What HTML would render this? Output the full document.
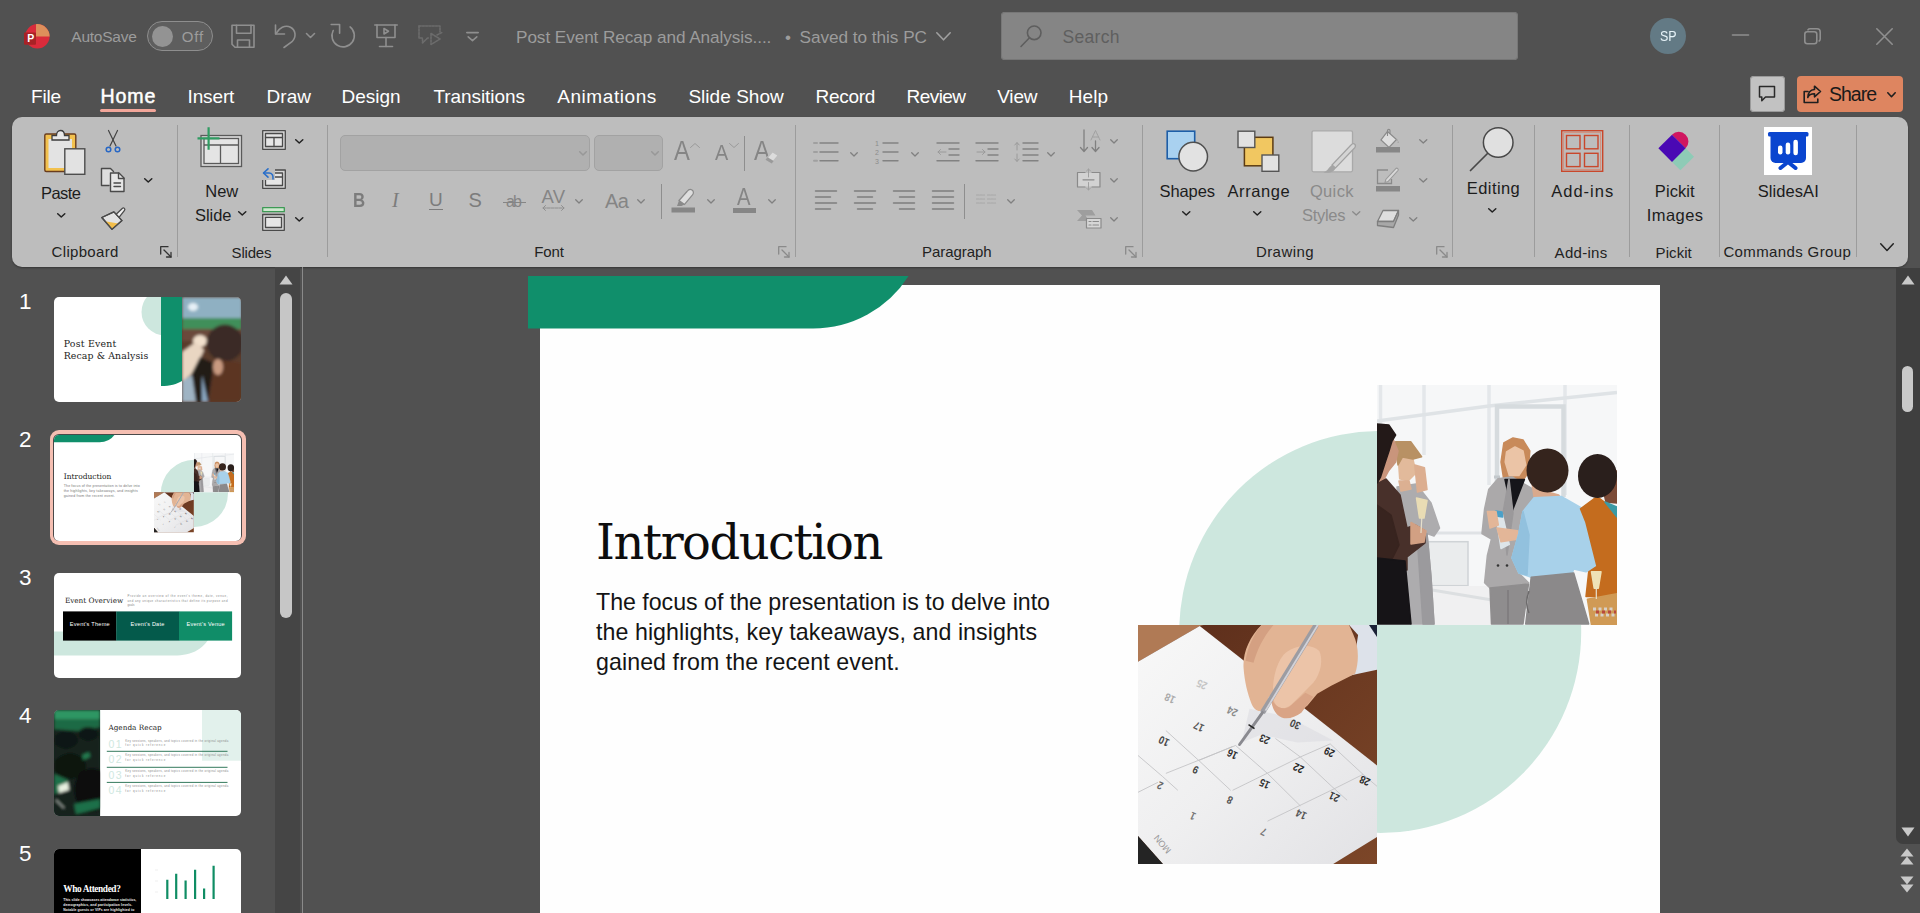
<!DOCTYPE html>
<html lang="en">
<head>
<meta charset="utf-8">
<title>Post Event Recap and Analysis - PowerPoint</title>
<style>
html,body{margin:0;padding:0}
html{overflow:hidden;width:1920px;height:913px}
body{width:1920px;height:913px;overflow:hidden;position:relative;background:#515151;font-family:"Liberation Sans",sans-serif;color:#fff}
.a{position:absolute}
.t{position:absolute;white-space:nowrap;line-height:1;transform-origin:0 50%}
svg{position:absolute;overflow:visible}
.ic{fill:none;stroke:#8f8f8f;stroke-width:1.6;stroke-linecap:round;stroke-linejoin:round}
/* title bar */
#search{left:1001px;top:12px;width:517px;height:48px;background:#858585;border-radius:4px;box-shadow:0 0 0 1px #777 inset}
#avatar{left:1650px;top:18px;width:36px;height:36px;border-radius:50%;background:#637a85}
#toggle{left:147px;top:21px;width:66px;height:30px;border:1.500px solid #8e8e8e;border-radius:15px;background:#5e5e5e;box-sizing:border-box}
#knob{left:151.500px;top:25.500px;width:21px;height:21px;border-radius:50%;background:#939393}
/* tabs */
.tab{font-size:19px;color:#fff}
#homeul{left:100px;top:109px;width:56px;height:3px;border-radius:2px;background:#f2a69a}
#cmt{left:1749.500px;top:76.300px;width:35.500px;height:35.500px;background:#c2c2c2;border-radius:4px;box-shadow:0 0 0 1px #9a9a9a inset}
#share{left:1797px;top:76px;width:105.500px;height:36px;background:#de8560;border-radius:4px}
/* ribbon */
#ribbon{left:12px;top:117px;width:1896px;height:150px;background:#bdbdbd;border-radius:10px;box-shadow:0 1px 2px rgba(0,0,0,.35)}
.sep{position:absolute;width:1px;background:#9c9c9c;top:125px;height:132px}
.rl{font-size:15px;color:#222}
.rb{font-size:17px;color:#1c1c1c}
.dim{color:#8a8a8a}
/* panels */
#thumbsb{left:275px;top:267px;width:24.500px;height:646px;background:#454545}
#divider{left:302px;top:267px;width:1px;height:646px;background:#8a8a8a}
#vsb{left:1895.500px;top:268px;width:25px;height:576px;background:#3f3f3f;border-radius:0 0 0 7px}
.num{font-size:22.500px;color:#fff}
.th{position:absolute;left:54px;width:187px;height:105px;background:#fff;border-radius:5px;overflow:hidden}
/* slide */
#slide{left:540px;top:285px;width:1120px;height:628px;background:#fefefe}
</style>
</head>
<body>
<svg width="0" height="0" style="left:0;top:0">
<defs>
<symbol id="phA" viewBox="0 0 240 240" preserveAspectRatio="none">
<rect width="240" height="240" fill="#f6f7f8"/>
<path d="M3.500 0V40M47 0V70M112 0V100M188 0V110" stroke="#e4e7ea" stroke-width="3.500" fill="none"/>
<path d="M0 36L112 21L240 7.400" stroke="#dfe3e6" stroke-width="3.500" fill="none"/>
<path d="M120 110V21.500H186.500V112" stroke="#d6dbde" stroke-width="4.500" fill="none"/>
<path d="M117 92h6" stroke="#c3c8cc" stroke-width="3"/>
<rect x="51.500" y="156.700" width="39.500" height="44" fill="#eaeced" stroke="#cfd3d6" stroke-width="1.500"/>
<path d="M55 201H118V240H55z" fill="#f0f0f1"/>
<path d="M55 205l60 10" stroke="#dcdfe1" stroke-width="3"/>
<path d="M55 148h50" stroke="#dfe2e5" stroke-width="3"/>
<polygon points="20,102 39,99 54,118 62.5,143 57,151 50,148.5 54,192 57,239 33.7,239 28,176 25.5,159.4" fill="#adacae" stroke="#adacae" stroke-width="1.500" stroke-linejoin="round"/>
<polygon points="40,150 50,148.5 54,192 57,239 46,239" fill="#9b9a9d" stroke="#9b9a9d" stroke-width="1.500" stroke-linejoin="round"/>
<polygon points="21,69 36,74.5 39,88 31,96 22.7,93.7" fill="#e2ba9b" stroke="#e2ba9b" stroke-width="1.500" stroke-linejoin="round"/>
<polygon points="22,96 32,96 34,104 24,106" fill="#dcb092" stroke="#dcb092" stroke-width="1.500" stroke-linejoin="round"/>
<polygon points="18.6,56.7 33.7,56.7 44.6,71.8 36,74 25.5,72 21,80 19,66" fill="#b89164" stroke="#b89164" stroke-width="1.500" stroke-linejoin="round"/>
<polygon points="37.8,80 47.4,82.7 50,104.6 40.5,107" fill="#dcae90" stroke="#dcae90" stroke-width="1.500" stroke-linejoin="round"/>
<polygon points="0,96 9,94 23,110 30,143 38,140 48,146 48,158 30,172 30,185 0,185" fill="#48302a" stroke="#48302a" stroke-width="1.500" stroke-linejoin="round"/>
<polygon points="0,120 14,130 22,160 14,176 0,178" fill="#38241f" stroke="#38241f" stroke-width="1.500" stroke-linejoin="round"/>
<polygon points="0,173 28,176 34,239 0,239" fill="#161417" stroke="#161417" stroke-width="1.500" stroke-linejoin="round"/>
<polygon points="9,52 16,54 21,66 18.6,77 11.8,85.5 7.7,93 2,96" fill="#c9957c" stroke="#c9957c" stroke-width="1.500" stroke-linejoin="round"/>
<polygon points="0,39 11.8,40 18.6,50 15,56 12,66 8,78 3.5,92 0,98" fill="#231918" stroke="#231918" stroke-width="1.500" stroke-linejoin="round"/>
<polygon points="34,137.5 49,146 47,157 34,159" fill="#d2a083" stroke="#d2a083" stroke-width="1.500" stroke-linejoin="round"/>
<polygon points="39.5,113 50,115.6 47,133 42.5,133" fill="#e9dcb4" stroke="#e9dcb4" stroke-width="1.500" stroke-linejoin="round"/>
<path d="M44.800 133L44 148" stroke="#e6e0cc" stroke-width="1.200"/>
<polygon points="126.8,58 136,53 146,55 152.8,66 151,88 146,95 126.8,95 124,77" fill="#c88a5a" stroke="#c88a5a" stroke-width="1.500" stroke-linejoin="round"/>
<polygon points="129.5,67 138,62 146,66 148.7,80 141.9,90.5 132.3,90.5 128.2,77" fill="#ebc4a6" stroke="#ebc4a6" stroke-width="1.500" stroke-linejoin="round"/>
<polygon points="121,93.7 135,92 157,104.6 162.4,115.6 146,132 140.5,186.8 151.5,197.8 113,203 107.6,197.8 110.4,170.4 114.5,154 105,148.5 107.6,123.8 111.7,104.6" fill="#aba9aa" stroke="#aba9aa" stroke-width="1.500" stroke-linejoin="round"/>
<polygon points="128,94.5 147.4,94.5 135,126.5" fill="#15151a" stroke="#15151a" stroke-width="1.500" stroke-linejoin="round"/>
<polygon points="132,94 136,128 130,170 126,128" fill="#9b999b" stroke="#9b999b" stroke-width="1.500" stroke-linejoin="round"/>
<polygon points="113,203 151.5,199 146,239 114.5,239" fill="#8f8d8e" stroke="#8f8d8e" stroke-width="1.500" stroke-linejoin="round"/>
<path d="M131 205V239" stroke="#7c7a7b" stroke-width="1.500"/>
<polygon points="118.6,128 125.4,129.3 132.3,159.4 124,163.5" fill="#dde5e9" stroke="#dde5e9" stroke-width="1.500" stroke-linejoin="round"/>
<polygon points="118.6,126 125,127 125.6,132 119.2,131" fill="#4aa0c8" stroke="#4aa0c8" stroke-width="1.500" stroke-linejoin="round"/>
<polygon points="110.4,126.5 119,126.5 121.3,140 113,143" fill="#e3b698" stroke="#e3b698" stroke-width="1.500" stroke-linejoin="round"/>
<polygon points="120,143 140.5,145.7 141.9,154 124,156.7" fill="#e3b698" stroke="#e3b698" stroke-width="1.500" stroke-linejoin="round"/>
<circle cx="121" cy="180.500" r="1.300" fill="#333"/><circle cx="130" cy="180.500" r="1.300" fill="#333"/>
<polygon points="154,92 162.4,104.6 181.6,110 186,116 158,118" fill="#d9a98c" stroke="#d9a98c" stroke-width="1.500" stroke-linejoin="round"/>
<ellipse cx="170.500" cy="85.500" rx="21" ry="22" fill="#35241d"/>
<polygon points="157,112.8 184.3,111.5 206.2,123.8 220,181.3 209,186.8 196.7,184 195.3,188 154.2,192.3 141.9,188 135,173 141.9,148.5 146,126.5" fill="#a8d1ea" stroke="#a8d1ea" stroke-width="1.500" stroke-linejoin="round"/>
<polygon points="146,126.5 152,150 150,190 141.9,188 135,173 141.9,148.5" fill="#92c1de" stroke="#92c1de" stroke-width="1.500" stroke-linejoin="round"/>
<polygon points="154.2,192.3 196.7,188 211.7,239 148.7,239" fill="#8b898a" stroke="#8b898a" stroke-width="1.500" stroke-linejoin="round"/>
<path d="M152 206c-3 8-3 16 0 22" stroke="#6c6a6b" stroke-width="1.500" fill="none"/>
<polygon points="203.5,123.8 220,111.5 240,126.5 240,211.5 209,211.5 211.7,186.8 220,181.3 209,137.5" fill="#c46c1e" stroke="#c46c1e" stroke-width="1.500" stroke-linejoin="round"/>
<polygon points="226,86 240,86 240,118 229,117 226,104" fill="#7c4b37" stroke="#7c4b37" stroke-width="1.500" stroke-linejoin="round"/>
<polygon points="228,117 240,132 240,122" fill="#3b9aa5" stroke="#3b9aa5" stroke-width="1.500" stroke-linejoin="round"/>
<ellipse cx="220.500" cy="91" rx="19.500" ry="22" fill="#2a1f1c"/>
<polygon points="210.4,214.2 240,208.7 240,240 214.5,240" fill="#d09a55" stroke="#d09a55" stroke-width="1.500" stroke-linejoin="round"/>
<path d="M216 224h22M218 230h20" stroke="#d8d0c8" stroke-width="3" stroke-dasharray="3 2.500"/>
<path d="M219 227h20" stroke="#b8483e" stroke-width="3" stroke-dasharray="3 3"/>
<polygon points="214.5,186.8 224,186.8 221.3,203.2 217.2,203.2" fill="#efe2b6" stroke="#efe2b6" stroke-width="1.500" stroke-linejoin="round"/>
<path d="M219.300 203V214" stroke="#e8e2d0" stroke-width="1.200"/>
</symbol>
<symbol id="phB" viewBox="0 0 240 240" preserveAspectRatio="none">
<defs><linearGradient id="pg" x1="0" y1="0" x2="1" y2="1"><stop offset="0" stop-color="#f8f8f8"/><stop offset="0.500" stop-color="#efeff0"/><stop offset="1" stop-color="#e2e2e5"/></linearGradient><linearGradient id="dg" x1="0" y1="0" x2="1" y2="1"><stop offset="0" stop-color="#5a2c1a"/><stop offset="1" stop-color="#7c4628"/></linearGradient></defs>
<rect width="240" height="240" fill="url(#dg)"/>
<polygon points="0,0 66,0 62,1 0,37" fill="#b07a55"/>
<polygon points="62,1 240,141 240,213 196,240 25,240 0,212 0,37" fill="url(#pg)"/>
<polygon points="0,212 25,240 0,240" fill="#242424"/>
<polygon points="112,84 150,92 196,116 160,118 124,110 104,118" fill="#dadae0" opacity="0.550"/>
<path d="M28 149L98 121M95 166L163 132.500L193 119.400M130 197L194 166L226 150M0 131L24.500 152M28 106L61 136L93 166M98 121L130 149L163 181.600M138 114L163 132.500L194.500 162L210 176M193 119.400L226 150L240 162M24.500 152L40 166M61 136L95 122M0 168L20 158" stroke="#c4c4c6" stroke-width="0.900" fill="none"/>
<g font-family="Liberation Sans, sans-serif" font-weight="bold" font-size="11" text-anchor="middle">
<text fill="#8a8a8a" transform="translate(94.6 87) rotate(205) scale(.85 1)" dy="4">24</text><text fill="#555" transform="translate(61 102.4) rotate(205) scale(.85 1)" dy="4">17</text><text fill="#444" transform="translate(157.7 100) rotate(205) scale(.85 1)" dy="4">30</text><text fill="#333" transform="translate(127 115) rotate(205) scale(.85 1)" dy="4">23</text><text fill="#444" transform="translate(26 116.8) rotate(205) scale(.85 1)" dy="4">10</text><text fill="#2c2c2c" transform="translate(192 128) rotate(205) scale(.85 1)" dy="4">29</text><text fill="#2c2c2c" transform="translate(94.6 130) rotate(205) scale(.85 1)" dy="4">16</text><text fill="#262626" transform="translate(161 144) rotate(205) scale(.85 1)" dy="4">22</text><text fill="#444" transform="translate(57.8 145.7) rotate(205) scale(.85 1)" dy="4">9</text><text fill="#2c2c2c" transform="translate(227.7 156.7) rotate(205) scale(.85 1)" dy="4">28</text><text fill="#333" transform="translate(127 159.7) rotate(205) scale(.85 1)" dy="4">15</text><text fill="#666" transform="translate(22 161.5) rotate(205) scale(.85 1)" dy="4">2</text><text fill="#3a3a3a" transform="translate(197 172.9) rotate(205) scale(.85 1)" dy="4">21</text><text fill="#555" transform="translate(92 176) rotate(205) scale(.85 1)" dy="4">8</text><text fill="#555" transform="translate(163.8 190.4) rotate(205) scale(.85 1)" dy="4">14</text><text fill="#777" transform="translate(55 192) rotate(205) scale(.85 1)" dy="4">1</text><text fill="#777" transform="translate(126 208) rotate(205) scale(.85 1)" dy="4">7</text><text fill="#aaa" transform="translate(32 74) rotate(205) scale(.85 1)" dy="4">18</text><text fill="#c4c4c4" transform="translate(64 60) rotate(205) scale(.85 1)" dy="4">25</text>
<text x="24.500" y="220" fill="#9a9a9a" font-weight="normal" font-size="9" transform="rotate(230 24.500 220)" dy="3">MON</text>
</g>
<polygon points="212,0 240,0 240,45 207,52 218,30 221,10" fill="#dde2ea"/>
<polygon points="232,0 240,0 240,12" fill="#1b2236"/>
<path d="M124 0C112 12 105 28 106 43c1 14 4 26 8 36 3 7 8 9 12 6l6-14c2 8 4 14 10 18 8 3 20-2 28-8l10-12 14-8 24-12c4-12 4-28-2-40L212 0z" fill="#e2b494"/>
<path d="M146 30c10-10 28-12 36-4 4 8 2 22-6 32l-22 22c-8 6-16 4-18-6-2-16 2-34 10-44z" fill="#ecc4a8"/>
<path d="M134 74c4 8 10 12 18 8l16-14 8 4-12 16c-8 6-18 8-24 2-4-4-6-10-6-16z" fill="#d9a486"/>
<path d="M124 0c-8 10-14 22-16 36l8 2c4-14 10-26 20-38z" fill="#d4a082"/>
<path d="M179 0L125 88" stroke="#9c9ca2" stroke-width="5.500" fill="none"/>
<path d="M180.500 0L128 86" stroke="#d2d2d8" stroke-width="1.800" fill="none"/>
<path d="M125 88L102 120" stroke="#8a8a90" stroke-width="3" stroke-linecap="round" fill="none"/>
<path d="M111 100l6 4" stroke="#222" stroke-width="1.500"/>
</symbol>
<filter id="bl" x="-10%" y="-10%" width="120%" height="120%"><feGaussianBlur stdDeviation="1.600"/></filter>
<symbol id="phC" viewBox="0 0 60 105" preserveAspectRatio="none"><rect width="60" height="105" fill="#5a3a2c"/><g filter="url(#bl)">
<rect width="60" height="105" fill="#5a3a2c"/>
<rect width="60" height="22" fill="#8fb0c2"/>
<ellipse cx="11" cy="10" rx="5" ry="4" fill="#e6f0f6"/>
<rect y="21" width="60" height="12" fill="#3f8f5a"/>
<rect y="32" width="60" height="12" fill="#6a4a3a"/>
<ellipse cx="18" cy="44" rx="7" ry="6" fill="#f2e0cc"/>
<path d="M0 55l14-10 8 8-10 22-12 10z" fill="#e9d6c2"/>
<path d="M8 80l10-20 14 6-6 39H10z" fill="#241a18"/>
<path d="M0 84l10-6 4 27H0z" fill="#9fb4c4"/>
<path d="M20 78l6 27h-6z" fill="#8aa6c0"/>
<circle cx="43" cy="46" r="18.500" fill="#3a2b26"/>
<path d="M32 62l28 4v39H28z" fill="#5c3424"/>
<ellipse cx="36" cy="70" rx="5" ry="8" fill="#c99a80"/>
</g></symbol>
<symbol id="phD" viewBox="0 0 46 106" preserveAspectRatio="none"><rect width="46" height="106" fill="#16241d"/><g filter="url(#bl)">
<rect width="46" height="106" fill="#16241d"/>
<rect width="46" height="9" fill="#2f9663"/>
<path d="M0 9h46v8l-20 4-26-2z" fill="#1f6a45"/>
<ellipse cx="12" cy="30" rx="12" ry="9" fill="#0f1512"/>
<ellipse cx="34" cy="24" rx="10" ry="7" fill="#101713"/>
<ellipse cx="16" cy="56" rx="16" ry="13" fill="#0d120f"/>
<path d="M28 45l7-3 1 5-7 3z" fill="#237a50"/>
<ellipse cx="38" cy="80" rx="18" ry="22" fill="#0c100e"/>
<path d="M0 64l14 6-2 10-12 4z" fill="#1f7048"/>
<path d="M4 76l10-4 1 8-10 3z" fill="#e8f0e0"/>
<path d="M20 94l26-5v9l-24 6z" fill="#1f7048"/>
<path d="M2 90l8 8" stroke="#dfe8e0" stroke-width="1"/>
</g></symbol>
</defs></svg>
<!-- TITLE BAR -->
<div class="a" id="titlebar">
<!-- powerpoint logo -->
<svg style="left:24px;top:23.500px" width="27" height="27" viewBox="0 0 27 27">
<defs><clipPath id="lc"><circle cx="13.400" cy="12.300" r="12.200"/></clipPath></defs>
<g clip-path="url(#lc)"><rect x="0" y="0" width="27" height="27" fill="#da2b3b"/><path d="M12 0h15v12.400H12z" fill="#de8f5b"/></g>
<rect x="0" y="8.500" width="12" height="12.200" rx="1" fill="#a82226"/>
<text x="3.200" y="18.300" font-family="Liberation Sans, sans-serif" font-weight="bold" font-size="10.500" fill="#fff">P</text>
</svg>
<span class="t" style="left:71.3px;top:29px;font-size:15.5px;color:#9c9c9c;width:65.5px;letter-spacing:-0.246px">AutoSave</span>
<div class="a" id="toggle"></div><div class="a" id="knob"></div>
<span class="t" style="left:181.7px;top:29px;font-size:15px;color:#9c9c9c;width:21.5px;letter-spacing:0.883px">Off</span>
<!-- save -->
<svg class="ic" style="left:231px;top:24px" width="24" height="24" viewBox="0 0 24 24"><path d="M1 1.200h22v22H4l-3-3z"/><path d="M5.500 1.200v8h14.500v-8"/><path d="M6.500 23v-7h12v7"/></svg>
<!-- undo -->
<svg class="ic" style="left:274px;top:23px" width="24" height="26" viewBox="0 0 24 26"><path d="M1.500 2v9h9"/><path d="M1.800 10.800C5 5 11 1.500 16.500 4.200c5.500 3 6 10 1.500 14.500L10 24.500"/></svg>
<svg class="ic" style="left:306px;top:33px" width="9" height="5" viewBox="0 0 9 5"><path d="M0.500 0.500l4 4 4-4"/></svg>
<!-- redo -->
<svg class="ic" style="left:330px;top:23px" width="26" height="26" viewBox="0 0 26 26"><path d="M20.100 3.900A11.200 11.200 0 1 1 3.200 7.500"/><path d="M1.200 1.500h8.400v8.800"/></svg>
<!-- present -->
<svg class="ic" style="left:374px;top:24px" width="24" height="24" viewBox="0 0 24 24"><path d="M0.800 1h22.400"/><path d="M3 1v12.500h18V1"/><path d="M12 13.500v9"/><path d="M5.500 22.500h13"/><path d="M10 4.500v5.500l4.500-2.750z"/></svg>
<!-- disabled -->
<svg class="ic" style="left:418px;top:25px;stroke:#6c6c6c;stroke-dasharray:2 1.300" width="26" height="22" viewBox="0 0 26 22"><path d="M1 1h21v6"/><path d="M1 1v12h3.500v5l5-5h2"/><path d="M13 8.500v11l9-5.500z"/><path d="M19 10l5-2.500"/></svg>
<!-- customize -->
<svg class="ic" style="left:466px;top:31px" width="13" height="11" viewBox="0 0 13 11"><path d="M0.800 1.600h11.400"/><path d="M2.200 5.800l4.300 3.800 4.300-3.800"/></svg>
<span class="t" style="left:516px;top:28.700px;font-size:17.200px;color:#9c9c9c;width:255.400px;letter-spacing:-0.080px">Post Event Recap and Analysis....</span>
<span class="t" style="left:785px;top:28.700px;font-size:17px;color:#9c9c9c">•</span>
<span class="t" style="left:799.500px;top:28.700px;font-size:17.200px;color:#9c9c9c;width:127.500px;letter-spacing:-0.035px">Saved to this PC</span>
<svg class="ic" style="left:936px;top:32px;stroke:#a0a0a0" width="15" height="9" viewBox="0 0 15 9"><path d="M0.800 0.800l6.700 7 6.700-7"/></svg>
<div class="a" id="search"></div>
<svg class="ic" style="left:1020px;top:24px;stroke:#5e5e5e" width="23" height="24" viewBox="0 0 23 24"><circle cx="14.200" cy="8.800" r="6.800"/><path d="M9.500 13.800L1 22.500"/></svg>
<span class="t" style="left:1062.500px;top:28.700px;font-size:17.500px;color:#5f5f5f;width:57px;letter-spacing:0.309px">Search</span>
<div class="a" id="avatar"></div>
<span class="t" style="left:1659.500px;top:29px;font-size:14.500px;color:#e6f3f8;transform:scaleX(.86)">SP</span>
<svg class="ic" style="left:1732px;top:34px" width="17" height="2" viewBox="0 0 17 2"><path d="M0.500 1h16"/></svg>
<svg class="ic" style="left:1804px;top:28px" width="17" height="17" viewBox="0 0 17 17"><rect x="0.800" y="3.800" width="12" height="12" rx="2.500"/><path d="M4 1.800c0.500-0.700 1.200-1 2-1h7a3.200 3.200 0 0 1 3.200 3.200v7c0 0.800-0.300 1.500-1 2"/></svg>
<svg class="ic" style="left:1876px;top:28px" width="17" height="17" viewBox="0 0 17 17"><path d="M0.800 0.800l15.400 15.400M16.200 0.800L0.800 16.200"/></svg>
</div>
<!-- TABS -->
<div class="a" id="tabs">
<span class="t tab" style="left:31.0px;top:87px;width:30.2px;letter-spacing:-0.142px">File</span>
<span class="t tab" style="left:100.5px;top:87px;width:54.8px;font-size:19.600px;-webkit-text-stroke:0.500px #fff;letter-spacing:0.840px">Home</span>
<span class="t tab" style="left:187.5px;top:87px;width:46.9px;letter-spacing:-0.126px">Insert</span>
<span class="t tab" style="left:266.5px;top:87px;width:44.5px;letter-spacing:0.052px">Draw</span>
<span class="t tab" style="left:341.5px;top:87px;width:59.1px;letter-spacing:-0.011px">Design</span>
<span class="t tab" style="left:433.4px;top:87px;width:91.6px;letter-spacing:-0.062px">Transitions</span>
<span class="t tab" style="left:557.2px;top:87px;width:99.1px;letter-spacing:0.567px">Animations</span>
<span class="t tab" style="left:688.4px;top:87px;width:95.4px;letter-spacing:0.038px">Slide Show</span>
<span class="t tab" style="left:815.6px;top:87px;width:59.7px;letter-spacing:-0.310px">Record</span>
<span class="t tab" style="left:906.6px;top:87px;width:59.4px;letter-spacing:-0.583px">Review</span>
<span class="t tab" style="left:997.2px;top:87px;width:40.3px;letter-spacing:-0.181px">View</span>
<span class="t tab" style="left:1068.8px;top:87px;width:39.2px;letter-spacing:0.041px">Help</span>
<div class="a" id="homeul"></div>
<div class="a" id="cmt"></div>
<svg class="ic" style="left:1758px;top:85px;stroke:#2a2a2a;stroke-width:1.500" width="18" height="18" viewBox="0 0 18 18"><path d="M1.500 1.500h15v10.500H7.500L3.800 15.800V12H1.500z"/></svg>
<div class="a" id="share"></div>
<svg class="ic" style="left:1803px;top:85px;stroke:#1f1f1f;stroke-width:1.600" width="19" height="19" viewBox="0 0 19 19"><path d="M5 6.500H1.200v11h13.600v-3.500"/><path d="M11.500 1.200l6 5.300-6 5.300V8.700C8 8.700 5.800 10 4.800 12.500 5 8 7.500 4.800 11.500 4.500z"/></svg>
<span class="t" style="left:1829px;top:85px;font-size:19.500px;color:#1a1a1a;width:48px;letter-spacing:-1.012px">Share</span>
<svg class="ic" style="left:1887px;top:92px;stroke:#1f1f1f;stroke-width:1.600" width="9" height="6" viewBox="0 0 9 6"><path d="M0.800 0.800l3.700 3.900 3.700-3.900"/></svg>
</div>
<!-- RIBBON -->
<div class="a" id="ribbon"></div>
<div id="rc">
<div class="sep" style="left:177px"></div>
<div class="sep" style="left:327px"></div>
<div class="sep" style="left:795px"></div>
<div class="sep" style="left:1142px"></div>
<div class="sep" style="left:1452px"></div>
<div class="sep" style="left:1534px"></div>
<div class="sep" style="left:1629px"></div>
<div class="sep" style="left:1719px"></div>
<div class="sep" style="left:1856px"></div>
<!-- paste -->
<svg style="left:43px;top:129px" width="44" height="47" viewBox="0 0 44 47">
<rect x="1.800" y="5" width="31" height="37.500" rx="1.500" fill="#f2c14e" stroke="#6a3d1e" stroke-width="1.400"/>
<rect x="5.500" y="10" width="23.500" height="29" fill="#e3e3e3"/>
<path d="M9 11V6.500h4.500c0-3 1.700-5 4-5s4 2 4 5H26V11z" fill="#e8e8e8" stroke="#3c3c3c" stroke-width="1.300"/>
<rect x="21.800" y="19.800" width="20" height="25.500" fill="#e2e2e2" stroke="#4d4d4d" stroke-width="1.400"/>
</svg>
<span class="t rb" style="left:41.0px;top:184.5px;font-size:16.5px;width:40.0px;letter-spacing:-0.551px">Paste</span>
<svg class="ic" style="left:56.5px;top:213.0px;stroke:#222;stroke-width:1.5" width="8.5" height="4.5" viewBox="0 0 8.5 4.5"><path d="M0.700 0.700L4.25 4.00L7.80 0.700"/></svg>
<!-- cut -->
<svg class="ic" style="left:104px;top:129px;stroke:#444;stroke-width:1.200" width="18" height="26" viewBox="0 0 18 26"><path d="M4.500 1.500L12 17"/><path d="M13.500 1.500L6 17"/><circle cx="4.500" cy="20.500" r="2.300" stroke="#2767c5" stroke-width="1.500"/><circle cx="13.500" cy="20.500" r="2.300" stroke="#2767c5" stroke-width="1.500"/></svg>
<!-- copy -->
<svg class="ic" style="left:100px;top:167px;stroke:#4a4a4a;stroke-width:1.400" width="26" height="26" viewBox="0 0 26 26"><path d="M9 18.500H1.500V1.500h9l3 3" fill="#dedede"/><path d="M10.500 6h8.500l5 5v13.500H10.500z" fill="#e6e6e6"/><path d="M18.500 6v5.500H24"/><path d="M14 16h6.500M14 19.500h6.500"/></svg>
<svg class="ic" style="left:144.0px;top:178.0px;stroke:#222;stroke-width:1.5" width="8.5" height="4.5" viewBox="0 0 8.5 4.5"><path d="M0.700 0.700L4.25 4.00L7.80 0.700"/></svg>
<!-- format painter -->
<svg class="ic" style="left:101px;top:206px;stroke:#4a4a4a;stroke-width:1.300" width="26" height="25" viewBox="0 0 26 25"><path d="M15.200 8.200l6.300-5.900c1.200-1.100 3.100.7 2 2l-5.300 6.900" fill="#f2f2f2"/><path d="M12.900 5.900L21 14.600 11 23.300 0.800 11.500z" fill="#e2e2e2"/><path d="M4.200 15.200l13 2.200-6.200 5.400z" fill="#f2bd4a" stroke="none"/><path d="M12.900 5.900L21 14.600 11 23.300 0.800 11.500z"/></svg>
<span class="t rl" style="left:51.6px;top:243.9px;font-size:15.0px;width:66.7px;letter-spacing:0.310px">Clipboard</span>
<svg class="ic" style="left:160.0px;top:246.0px;stroke:#333;stroke-width:1.300" width="12" height="12" viewBox="0 0 12 12"><path d="M0.700 8V0.700H8"/><path d="M4 4l7 7"/><path d="M6.500 11H11V6.500"/></svg>
<!-- new slide -->
<svg style="left:196px;top:126px" width="48" height="43" viewBox="0 0 48 43">
<rect x="5" y="9.500" width="40.500" height="31" fill="#d9d9d9" stroke="#5a5a5a" stroke-width="1.300"/>
<rect x="8" y="12.500" width="34.500" height="25" fill="#e4e4e4" stroke="#5a5a5a" stroke-width="1.300"/>
<path d="M8 19h34.500M24.500 19v18.500" stroke="#5a5a5a" stroke-width="1.300" fill="none"/>
<path d="M1.500 12.400h22M12.600 1.200v22.500" stroke="#2f9c62" stroke-width="2.200" fill="none"/>
</svg>
<span class="t rb" style="left:205.2px;top:182.5px;font-size:16.5px;width:33.1px;letter-spacing:0.042px">New</span>
<span class="t rb" style="left:195.0px;top:206.5px;font-size:16.5px;width:36.5px;letter-spacing:-0.051px">Slide</span>
<svg class="ic" style="left:238.0px;top:211.0px;stroke:#222;stroke-width:1.5" width="8.5" height="4.5" viewBox="0 0 8.5 4.5"><path d="M0.700 0.700L4.25 4.00L7.80 0.700"/></svg>
<!-- layout -->
<svg class="ic" style="left:262px;top:130px;stroke:#4a4a4a;stroke-width:1.300" width="24" height="20" viewBox="0 0 24 20"><rect x="0.700" y="0.700" width="22.600" height="18.600" fill="#d6d6d6"/><rect x="3.500" y="3.500" width="17" height="13" fill="#e6e6e6"/><path d="M3.500 7.500h17M12 7.500v9"/></svg>
<svg class="ic" style="left:295.0px;top:139.0px;stroke:#222;stroke-width:1.5" width="8.5" height="4.5" viewBox="0 0 8.5 4.5"><path d="M0.700 0.700L4.25 4.00L7.80 0.700"/></svg>
<!-- reset -->
<svg class="ic" style="left:262px;top:168px;stroke:#4a4a4a;stroke-width:1.300" width="24" height="21" viewBox="0 0 24 21"><rect x="0.700" y="2" width="22.600" height="18.300" fill="#d6d6d6"/><rect x="3.500" y="5" width="17" height="12.500" fill="#e6e6e6"/><path d="M3.500 9h17"/><path d="M0 0h13v12H0z" fill="#bdbdbd" stroke="none"/><path d="M6 0.800L1.500 5l4.500 4.200" stroke="#2a6fc9" stroke-width="1.600"/><path d="M1.800 5H7c3 0 4.500 2.500 4 6" stroke="#2a6fc9" stroke-width="1.600"/></svg>
<!-- section -->
<svg class="ic" style="left:262px;top:207px;stroke:#4a4a4a;stroke-width:1.300" width="23" height="24" viewBox="0 0 23 24"><rect x="0.700" y="0.700" width="21.600" height="4" fill="#cfe8cf" stroke="#3d9a55"/><rect x="0.700" y="7.500" width="21.600" height="15.800" fill="#d6d6d6"/><rect x="3.500" y="10.300" width="16" height="10.200" fill="#e6e6e6"/></svg>
<svg class="ic" style="left:295.0px;top:217.0px;stroke:#222;stroke-width:1.5" width="8.5" height="4.5" viewBox="0 0 8.5 4.5"><path d="M0.700 0.700L4.25 4.00L7.80 0.700"/></svg>
<span class="t rl" style="left:231.6px;top:244.8px;font-size:15.0px;width:39.9px;letter-spacing:-0.192px">Slides</span>
<!-- FONT GROUP -->
<div class="a" style="left:340px;top:135px;width:250px;height:36px;background:#b0b0b0;border:1px solid #a2a2a2;border-radius:5px;box-sizing:border-box"></div>
<div class="a" style="left:594px;top:135px;width:69px;height:36px;background:#b0b0b0;border:1px solid #a2a2a2;border-radius:5px;box-sizing:border-box"></div>
<svg class="ic" style="left:578.5px;top:151.0px;stroke:#989898;stroke-width:1.5" width="8.0" height="4.5" viewBox="0 0 8.0 4.5"><path d="M0.700 0.700L4.00 4.00L7.30 0.700"/></svg>
<svg class="ic" style="left:651.0px;top:151.0px;stroke:#989898;stroke-width:1.5" width="8.0" height="4.5" viewBox="0 0 8.0 4.5"><path d="M0.700 0.700L4.00 4.00L7.30 0.700"/></svg>
<span class="t rb" style="left:353.0px;top:189.8px;font-size:20.0px;width:10.7px;font-weight:bold;color:#7c7c7c;transform:scaleX(.84);letter-spacing:0.000px">B</span>
<span class="t rb" style="left:392.0px;top:189.8px;font-size:20.0px;width:9.7px;font-family:Liberation Serif,serif;font-style:italic;color:#7c7c7c;letter-spacing:0.000px">I</span>
<span class="t rb" style="left:429.0px;top:190.1px;font-size:19.0px;width:12.8px;color:#7c7c7c;letter-spacing:0.000px">U</span>
<div class="a" style="left:428.500px;top:208.500px;width:14px;height:1.500px;background:#7c7c7c"></div>
<span class="t rb" style="left:468.5px;top:189.8px;font-size:20.0px;width:10.1px;color:#7c7c7c;letter-spacing:0.000px">S</span>
<span class="t rb" style="left:506.0px;top:194.0px;font-size:16.0px;width:16.0px;color:#858585;letter-spacing:-1.797px">ab</span>
<div class="a" style="left:502.500px;top:202px;width:23.500px;height:1.400px;background:#858585"></div>
<span class="t rb" style="left:541.5px;top:187.6px;font-size:18.5px;width:23.5px;color:#858585;letter-spacing:0.188px">AV</span>
<svg class="ic" style="left:542px;top:204.500px;stroke:#8e8e8e;stroke-width:1" width="23" height="6" viewBox="0 0 23 6"><path d="M1 3h21M3.500 0.500L1 3l2.500 2.500M19.500 0.500L22 3l-2.500 2.500" stroke-dasharray="3 1"/></svg>
<svg class="ic" style="left:574.5px;top:199.3px;stroke:#808080;stroke-width:1.3" width="8.0" height="4.5" viewBox="0 0 8.0 4.5"><path d="M0.700 0.700L4.00 4.00L7.30 0.700"/></svg>
<span class="t rb" style="left:605.0px;top:191.1px;font-size:20.0px;width:24.0px;color:#858585;letter-spacing:-0.469px">Aa</span>
<svg class="ic" style="left:637.0px;top:199.3px;stroke:#808080;stroke-width:1.3" width="8.0" height="4.5" viewBox="0 0 8.0 4.5"><path d="M0.700 0.700L4.00 4.00L7.30 0.700"/></svg>
<div class="a" style="left:661px;top:183.500px;width:1px;height:35px;background:#8e8e8e"></div>
<div class="a" style="left:744px;top:135.500px;width:1px;height:35px;background:#8e8e8e"></div>
<span class="t rb" style="left:674.0px;top:137.9px;font-size:27.0px;width:16.5px;color:#858585;transform:scaleX(.88);letter-spacing:0.000px">A</span>
<svg class="ic" style="left:690px;top:143px;stroke:#9a9a9a;stroke-width:1" width="10" height="5" viewBox="0 0 10 5"><path d="M0.500 4.500L5 0.500l4.500 4"/></svg>
<span class="t rb" style="left:715.0px;top:141.8px;font-size:22.5px;width:13.7px;color:#858585;transform:scaleX(.88);letter-spacing:0.000px">A</span>
<svg class="ic" style="left:729px;top:143px;stroke:#9a9a9a;stroke-width:1" width="10" height="5" viewBox="0 0 10 5"><path d="M0.500 0.500L5 4.500l4.500-4"/></svg>
<span class="t rb" style="left:754.0px;top:137.9px;font-size:27.0px;width:15.0px;color:#858585;transform:scaleX(.88);letter-spacing:0.000px">A</span>
<svg style="left:763px;top:150px" width="17" height="15" viewBox="0 0 17 15"><path d="M9.500 1.500l6 3.800-6.800 8.200-6.200-3.800z" fill="#dcdcdc" stroke="#bdbdbd" stroke-width="1.600"/><path d="M2.500 9.700l6.200 3.800 2-2.500-6.100-3.800z" fill="#9a9a9a"/></svg>
<svg style="left:670px;top:188px" width="27" height="26" viewBox="0 0 27 26"><path d="M17 3.500c1.500-2 3.500-2.500 5-1.500s2 3 .5 5l-8 9.500-5.500-4z" fill="#dedede" stroke="#8a8a8a" stroke-width="1.200"/><path d="M9 12.500l5.500 4-3 1.500-4.500 0z" fill="#8a8a8a"/><rect x="1.500" y="19.500" width="23.500" height="5" fill="#868686"/></svg>
<svg class="ic" style="left:707.0px;top:199.3px;stroke:#808080;stroke-width:1.3" width="8.0" height="4.5" viewBox="0 0 8.0 4.5"><path d="M0.700 0.700L4.00 4.00L7.30 0.700"/></svg>
<span class="t rb" style="left:736.5px;top:185.5px;font-size:23.0px;width:15.3px;color:#858585;transform:scaleX(.88);letter-spacing:0.000px">A</span>
<div class="a" style="left:732.500px;top:207.500px;width:23.500px;height:5px;background:#868686"></div>
<svg class="ic" style="left:768.0px;top:199.3px;stroke:#808080;stroke-width:1.3" width="8.0" height="4.5" viewBox="0 0 8.0 4.5"><path d="M0.700 0.700L4.00 4.00L7.30 0.700"/></svg>
<span class="t rl" style="left:534.2px;top:243.9px;font-size:15.0px;width:29.8px;letter-spacing:-0.072px">Font</span>
<svg class="ic" style="left:778.0px;top:246.0px;stroke:#8a8a8a;stroke-width:1.300" width="12" height="12" viewBox="0 0 12 12"><path d="M0.700 8V0.700H8"/><path d="M4 4l7 7"/><path d="M6.500 11H11V6.500"/></svg>
<!-- PARAGRAPH GROUP -->
<svg class="ic" style="left:813px;top:140px;stroke:#828282;stroke-width:1.400" width="26" height="24" viewBox="0 0 26 24"><path d="M7 3h18M7 12h18M7 20.800h18"/><path d="M1 3h3M1 12h3M1 20.800h3" stroke="#a0a0a0" stroke-width="2"/></svg>
<svg class="ic" style="left:850.0px;top:151.5px;stroke:#808080;stroke-width:1.3" width="8.0" height="4.5" viewBox="0 0 8.0 4.5"><path d="M0.700 0.700L4.00 4.00L7.30 0.700"/></svg>
<svg class="ic" style="left:875px;top:140px;stroke:#828282;stroke-width:1.400" width="26" height="26" viewBox="0 0 26 26"><path d="M8 3h15M8 12h15M8 20.800h15"/></svg>
<span class="t" style="left:875px;top:139.500px;font-size:7px;color:#8c8c8c">1</span><span class="t" style="left:875px;top:148.500px;font-size:7px;color:#8c8c8c">2</span><span class="t" style="left:875px;top:157.500px;font-size:7px;color:#8c8c8c">3</span>
<svg class="ic" style="left:911.0px;top:151.5px;stroke:#808080;stroke-width:1.3" width="8.0" height="4.5" viewBox="0 0 8.0 4.5"><path d="M0.700 0.700L4.00 4.00L7.30 0.700"/></svg>
<svg class="ic" style="left:936px;top:140px;stroke:#828282;stroke-width:1.400" width="26" height="24" viewBox="0 0 26 24"><path d="M1 3h22M13 9h10M13 15h10M1 20.800h22"/><path d="M2 12h8M4.500 9.500L2 12l2.500 2.500" stroke="#9a9a9a" stroke-width="1"/></svg>
<svg class="ic" style="left:975px;top:140px;stroke:#828282;stroke-width:1.400" width="26" height="24" viewBox="0 0 26 24"><path d="M1 3h22M13 9h10M13 15h10M1 20.800h22"/><path d="M2 12h8M7.500 9.500L10 12l-2.500 2.500" stroke="#9a9a9a" stroke-width="1"/></svg>
<svg class="ic" style="left:1013px;top:140px;stroke:#828282;stroke-width:1.400" width="26" height="24" viewBox="0 0 26 24"><path d="M10 3h15M10 9h15M10 15h15M10 20.800h15"/><path d="M4 3v7M1.800 5L4 2.500 6.200 5M4 14v7M1.800 19L4 21.500 6.200 19" stroke="#9a9a9a" stroke-width="1"/></svg>
<svg class="ic" style="left:1047.0px;top:151.5px;stroke:#808080;stroke-width:1.3" width="8.0" height="4.5" viewBox="0 0 8.0 4.5"><path d="M0.700 0.700L4.00 4.00L7.30 0.700"/></svg>
<svg class="ic" style="left:815.0px;top:190px;stroke:#7e7e7e;stroke-width:1.500" width="24" height="20" viewBox="0 0 24 20"><path d="M0.5 1.0h21.0M0.5 7.0h15.0M0.5 13.0h21.0M0.5 19.0h15.0"/></svg>
<svg class="ic" style="left:854.0px;top:190px;stroke:#7e7e7e;stroke-width:1.500" width="24" height="20" viewBox="0 0 24 20"><path d="M0.5 1.0h21.0M3.5 7.0h15.0M0.5 13.0h21.0M3.5 19.0h15.0"/></svg>
<svg class="ic" style="left:893.0px;top:190px;stroke:#7e7e7e;stroke-width:1.500" width="24" height="20" viewBox="0 0 24 20"><path d="M0.5 1.0h21.0M6.5 7.0h15.0M0.5 13.0h21.0M6.5 19.0h15.0"/></svg>
<svg class="ic" style="left:932.0px;top:190px;stroke:#7e7e7e;stroke-width:1.500" width="24" height="20" viewBox="0 0 24 20"><path d="M0.5 1.0h21.0M0.5 7.0h21.0M0.5 13.0h21.0M0.5 19.0h21.0"/></svg>
<div class="a" style="left:964px;top:183.500px;width:1px;height:35px;background:#8e8e8e"></div>
<svg class="ic" style="left:976px;top:194px;stroke:#a8a8a8;stroke-width:1.200;stroke-dasharray:2.500 1" width="21" height="14" viewBox="0 0 21 14"><path d="M0.500 1h8M11.500 1h8M0.500 5h8M11.500 5h8M0.500 9h8M11.500 9h8"/></svg>
<svg class="ic" style="left:1007.0px;top:199.3px;stroke:#808080;stroke-width:1.3" width="8.0" height="4.5" viewBox="0 0 8.0 4.5"><path d="M0.700 0.700L4.00 4.00L7.30 0.700"/></svg>
<svg class="ic" style="left:1079px;top:129px;stroke:#808080;stroke-width:1.300" width="26" height="25" viewBox="0 0 26 25"><path d="M5 1v21M1.500 18.500L5 22.500l3.500-4"/><path d="M16.500 12v10M13 18.500l3.500 4 3.500-4"/><path d="M12 11l4.500-9.500L21 11M13.500 8h6" stroke="#a0a0a0" stroke-width="1" stroke-dasharray="2.500 0.800"/></svg>
<svg class="ic" style="left:1110.0px;top:139.3px;stroke:#808080;stroke-width:1.3" width="8.0" height="4.5" viewBox="0 0 8.0 4.5"><path d="M0.700 0.700L4.00 4.00L7.30 0.700"/></svg>
<svg class="ic" style="left:1076px;top:168px;stroke:#8a8a8a;stroke-width:1.200" width="26" height="23" viewBox="0 0 26 23"><rect x="2" y="5" width="21.500" height="13.500" fill="#d2d2d2" stroke="none"/><path d="M9 4.500H1.500v14.500H9M16 4.500h8v14.500h-8"/><path d="M7 11.800h11" /><path d="M12.500 1v8M10.500 3L12.500 1l2 2M12.500 14.500v7.500M10.500 20l2 2 2-2" stroke="#a0a0a0" stroke-width="1"/></svg>
<svg class="ic" style="left:1110.0px;top:178.0px;stroke:#808080;stroke-width:1.3" width="8.0" height="4.5" viewBox="0 0 8.0 4.5"><path d="M0.700 0.700L4.00 4.00L7.30 0.700"/></svg>
<svg class="ic" style="left:1076px;top:209px;stroke:#8a8a8a;stroke-width:1.200" width="27" height="21" viewBox="0 0 27 21"><path d="M1 1h15l3.500 5.500H9.500L13 12H1l5-5.500z" fill="#9e9e9e" stroke="none"/><rect x="10.500" y="9.500" width="14.500" height="9.500" fill="#d6d6d6"/><path d="M13 12.500h2M17 12.500h5.500M13 16h2M17 16h5.500"/></svg>
<svg class="ic" style="left:1110.0px;top:217.0px;stroke:#808080;stroke-width:1.3" width="8.0" height="4.5" viewBox="0 0 8.0 4.5"><path d="M0.700 0.700L4.00 4.00L7.30 0.700"/></svg>
<span class="t rl" style="left:922.0px;top:243.9px;font-size:15.0px;width:69.6px;letter-spacing:-0.058px">Paragraph</span>
<svg class="ic" style="left:1125.0px;top:246.0px;stroke:#8a8a8a;stroke-width:1.300" width="12" height="12" viewBox="0 0 12 12"><path d="M0.700 8V0.700H8"/><path d="M4 4l7 7"/><path d="M6.500 11H11V6.500"/></svg>
<!-- DRAWING GROUP -->
<svg style="left:1165px;top:129px" width="46" height="45" viewBox="0 0 46 45"><rect x="2.200" y="2.200" width="27.500" height="27.500" fill="#a9d1f0" stroke="#1d5ea8" stroke-width="1.600"/><circle cx="28.200" cy="27.600" r="14.300" fill="#e2e2e2" stroke="#505050" stroke-width="1.500"/></svg>
<span class="t rb" style="left:1159.6px;top:183.0px;font-size:16.5px;width:55.4px;letter-spacing:-0.114px">Shapes</span>
<svg class="ic" style="left:1182.0px;top:211.4px;stroke:#222;stroke-width:1.5" width="8.5" height="4.5" viewBox="0 0 8.5 4.5"><path d="M0.700 0.700L4.25 4.00L7.80 0.700"/></svg>
<svg style="left:1236px;top:129px" width="45" height="45" viewBox="0 0 45 45"><rect x="8.400" y="8.300" width="28.500" height="28.500" fill="#f1c761" stroke="#5c3b12" stroke-width="1.500"/><rect x="2" y="2.200" width="16.800" height="16.300" fill="#e2e2e2" stroke="#555" stroke-width="1.400"/><rect x="26" y="26" width="16.800" height="16.300" fill="#e2e2e2" stroke="#555" stroke-width="1.400"/></svg>
<span class="t rb" style="left:1227.5px;top:183.0px;font-size:16.5px;width:62.3px;letter-spacing:0.599px">Arrange</span>
<svg class="ic" style="left:1253.3px;top:211.4px;stroke:#222;stroke-width:1.5" width="8.5" height="4.5" viewBox="0 0 8.5 4.5"><path d="M0.700 0.700L4.25 4.00L7.80 0.700"/></svg>
<svg style="left:1310px;top:129px" width="48" height="47" viewBox="0 0 48 47"><rect x="2" y="1.800" width="40.500" height="41" rx="1.500" fill="#dcdcdc" stroke="#a9a9a9" stroke-width="1.300"/><path d="M44.500 15c1.200 1 1 2.800 0 4L25.500 39l-3.500-3 19-20c1-1.200 2.500-1.800 3.500-1z" fill="#d4d4d4" stroke="#a2a2a2" stroke-width="1.200"/><path d="M22 36l3.500 3c-1 3.500-5 5.500-12 4.500 4-1.500 5-5 8.500-7.500z" fill="#a5a5a5"/></svg>
<span class="t rb dim" style="left:1309.9px;top:183.0px;font-size:16.5px;width:43.6px;letter-spacing:0.353px">Quick</span>
<span class="t rb dim" style="left:1302.0px;top:206.6px;font-size:16.5px;width:43.5px;letter-spacing:-0.287px">Styles</span>
<svg class="ic" style="left:1352.0px;top:211.4px;stroke:#8a8a8a;stroke-width:1.3" width="8.5" height="4.5" viewBox="0 0 8.5 4.5"><path d="M0.700 0.700L4.25 4.00L7.80 0.700"/></svg>
<svg style="left:1375px;top:128px" width="28" height="26" viewBox="0 0 28 26"><path d="M12.500 3.500l9 8-7.500 8-8-7.500z" fill="#dedede" stroke="#8a8a8a" stroke-width="1.200"/><path d="M12.500 8V2.500c0-1.500 2.500-1.500 2.500 0V6" fill="none" stroke="#8a8a8a" stroke-width="1.100"/><path d="M21.500 11.500c1.500 1.500 2 3 1.500 4.500" fill="none" stroke="#a5a5a5" stroke-width="1.200" stroke-dasharray="1.500 1"/><rect x="1" y="19" width="24" height="5.500" fill="#878787"/></svg>
<svg class="ic" style="left:1419.0px;top:139.3px;stroke:#808080;stroke-width:1.3" width="8.5" height="4.5" viewBox="0 0 8.5 4.5"><path d="M0.700 0.700L4.25 4.00L7.80 0.700"/></svg>
<svg style="left:1375px;top:167px" width="28" height="26" viewBox="0 0 28 26"><path d="M13 3H2.500v13.500h14V12" fill="none" stroke="#8a8a8a" stroke-width="1.300"/><path d="M21 1.500c1-1 3 .5 2 2L13 14.500l-3 1 .8-3z" fill="#d8d8d8" stroke="#9a9a9a" stroke-width="1.100"/><rect x="1" y="19" width="24" height="5.500" fill="#878787"/></svg>
<svg class="ic" style="left:1419.0px;top:178.0px;stroke:#808080;stroke-width:1.3" width="8.5" height="4.5" viewBox="0 0 8.5 4.5"><path d="M0.700 0.700L4.25 4.00L7.80 0.700"/></svg>
<svg style="left:1376px;top:209px" width="25" height="20" viewBox="0 0 25 20"><path d="M7 1.500h15.500l-5 11H1.500z" fill="#dedede" stroke="#7e7e7e" stroke-width="1.300" stroke-linejoin="round"/><path d="M1.500 12.500v4l16 2 5-12.500V1.500l-5 11z" fill="#a8a8a8" stroke="#7e7e7e" stroke-width="1.300" stroke-linejoin="round"/></svg>
<svg class="ic" style="left:1409.0px;top:217.0px;stroke:#808080;stroke-width:1.3" width="8.5" height="4.5" viewBox="0 0 8.5 4.5"><path d="M0.700 0.700L4.25 4.00L7.80 0.700"/></svg>
<span class="t rl" style="left:1255.9px;top:243.9px;font-size:15.0px;width:57.7px;letter-spacing:0.445px">Drawing</span>
<svg class="ic" style="left:1435.5px;top:246.0px;stroke:#8a8a8a;stroke-width:1.300" width="12" height="12" viewBox="0 0 12 12"><path d="M0.700 8V0.700H8"/><path d="M4 4l7 7"/><path d="M6.500 11H11V6.500"/></svg>
<!-- EDITING -->
<svg style="left:1469px;top:126px" width="46" height="46" viewBox="0 0 46 46"><circle cx="29.200" cy="16.500" r="14.800" fill="#e0e0e0" stroke="#484848" stroke-width="1.500"/><path d="M18.500 27.500L1.500 44.500" stroke="#484848" stroke-width="1.700" stroke-linecap="round"/></svg>
<span class="t rb" style="left:1466.8px;top:180.0px;font-size:16.5px;width:53.0px;letter-spacing:0.424px">Editing</span>
<svg class="ic" style="left:1488.0px;top:208.0px;stroke:#222;stroke-width:1.5" width="8.5" height="4.5" viewBox="0 0 8.5 4.5"><path d="M0.700 0.700L4.25 4.00L7.80 0.700"/></svg>
<!-- ADD-INS -->
<svg style="left:1560px;top:129px" width="45" height="44" viewBox="0 0 45 44" fill="none" stroke="#c9472b"><rect x="1.700" y="1.700" width="41" height="40.600" stroke-width="1.400"/><rect x="3.700" y="3.700" width="37" height="36.600" stroke-width="0.800" stroke="#d9836b"/><rect x="6.500" y="6.500" width="13.500" height="13.300" stroke-width="1.400"/><rect x="24.500" y="6.500" width="13.500" height="13.300" stroke-width="1.400"/><rect x="6.500" y="24.300" width="13.500" height="13.300" stroke-width="1.400"/><rect x="24.500" y="24.300" width="13.500" height="13.300" stroke-width="1.400"/></svg>
<span class="t rb" style="left:1551.2px;top:183.0px;font-size:16.5px;width:62.0px;letter-spacing:1.008px">Add-ins</span>
<span class="t rl" style="left:1554.6px;top:244.8px;font-size:15.0px;width:52.6px;letter-spacing:0.290px">Add-ins</span>
<!-- PICKIT -->
<svg style="left:1656px;top:130px" width="40" height="41" viewBox="0 0 40 41"><g transform="translate(16 18.300) rotate(45)"><rect x="9" y="-9.650" width="12.500" height="19.300" fill="#8ecbb6"/><path d="M-9.650 -9.600A9.650 9.650 0 0 1 9.650 -9.600z" fill="#d01660"/><rect x="-9.650" y="-9.650" width="19.300" height="19.300" fill="#4a08b4"/></g></svg>
<span class="t rb" style="left:1654.8px;top:183.0px;font-size:16.5px;width:39.9px;letter-spacing:0.096px">Pickit</span>
<span class="t rb" style="left:1646.8px;top:206.6px;font-size:16.5px;width:56.2px;letter-spacing:0.418px">Images</span>
<span class="t rl" style="left:1655.6px;top:244.8px;font-size:15.0px;width:36.2px;letter-spacing:0.071px">Pickit</span>
<!-- SLIDESAI -->
<svg style="left:1764px;top:127px" width="48" height="48" viewBox="0 0 48 48"><rect width="48" height="48" fill="#fff"/><rect x="4" y="5" width="40.500" height="4.500" rx="1.500" fill="#0a45cf"/><path d="M6.500 8h35.500v23a5 5 0 0 1-5 5H11.500a5 5 0 0 1-5-5z" fill="#0a45cf"/><path d="M16.500 41l7.500-6 7.500 6" fill="none" stroke="#0a45cf" stroke-width="4" stroke-linecap="round" stroke-linejoin="round"/><rect x="14" y="18.500" width="4.500" height="9" rx="2.200" fill="#fff"/><rect x="21.700" y="15.500" width="4.500" height="12" rx="2.200" fill="#fff"/><rect x="29.400" y="12.700" width="4.500" height="15.500" rx="2.200" fill="#fff"/></svg>
<span class="t rb" style="left:1757.7px;top:183.0px;font-size:16.5px;width:61.1px;letter-spacing:0.081px">SlidesAI</span>
<span class="t rl" style="left:1723.4px;top:243.9px;font-size:15.0px;width:127.4px;letter-spacing:0.372px">Commands Group</span>
<svg class="ic" style="left:1879.5px;top:242.5px;stroke:#222;stroke-width:1.5" width="14.0" height="8.0" viewBox="0 0 14.0 8.0"><path d="M0.700 0.700L7.00 7.50L13.30 0.700"/></svg>
</div>

<!-- THUMBNAILS -->
<div class="a" id="thumbs">
<span class="t num" style="left:19px;top:291.0px">1</span>
<span class="t num" style="left:19px;top:429.0px">2</span>
<span class="t num" style="left:19px;top:566.6px">3</span>
<span class="t num" style="left:19px;top:704.8px">4</span>
<span class="t num" style="left:19px;top:842.5px">5</span>
<div class="th" style="top:297px">
<svg style="left:0;top:0" width="187" height="105" viewBox="0 0 187 105">
<circle cx="111" cy="15" r="23.500" fill="#cde7de"/>
<use href="#phC" x="128" y="0" width="60" height="105"/>
<path d="M107 0h21v84c-5 3-12 5-21 5z" fill="#0f8f6b"/>
</svg>
<span class="t" style="left:9.700px;top:41.500px;font-size:9.400px;color:#1a1a1a;width:52.600px;font-family:'DejaVu Serif','Liberation Serif',serif;letter-spacing:0.219px">Post Event</span>
<span class="t" style="left:9.700px;top:54.300px;font-size:9.400px;color:#1a1a1a;width:84.600px;font-family:'DejaVu Serif','Liberation Serif',serif;letter-spacing:0.101px">Recap &amp; Analysis</span>
</div>
<div class="a" style="left:49.500px;top:430px;width:196px;height:114.500px;border-radius:9px;background:#f5bfb2"></div>
<div class="a" style="left:53px;top:433.500px;width:189px;height:107.500px;border-radius:6px;background:#4a4a4a"></div>
<div class="th" style="top:434.500px;height:106px;left:54px">
<svg style="left:0;top:0" width="187" height="106" viewBox="0 0 187 106">
<defs><clipPath id="tq1"><rect x="100" y="10" width="39.900" height="47.200"/></clipPath><clipPath id="tq2"><rect x="139.900" y="57.200" width="45" height="45"/></clipPath></defs>
<path d="M-2 -1.500H61.500A18.900 18.900 0 0 1 45.600 7.300H-2z" fill="#108f6b"/>
<circle cx="140.400" cy="58.300" r="33.600" fill="#cde7de" clip-path="url(#tq1)"/>
<circle cx="140.400" cy="58.300" r="33.600" fill="#cde7de" clip-path="url(#tq2)"/>
<use href="#phA" x="139.900" y="18" width="40.200" height="39.200"/>
<use href="#phB" x="100" y="57.200" width="39.900" height="40.300"/>
</svg>
<span class="t" style="left:9.700px;top:38.800px;font-size:7.500px;color:#1a1a1a;width:47.700px;font-family:'DejaVu Serif','Liberation Serif',serif;letter-spacing:0.018px">Introduction</span>
<span class="t" style="left:9.700px;top:50.800px;font-size:3.600px;color:#777;width:76px;letter-spacing:0.122px">The focus of the presentation is to delve into</span>
<span class="t" style="left:9.700px;top:55.700px;font-size:3.600px;color:#777;width:74px;letter-spacing:0.145px">the highlights, key takeaways, and insights</span>
<span class="t" style="left:9.700px;top:60.600px;font-size:3.600px;color:#777;width:51px;letter-spacing:0.152px">gained from the recent event.</span>
</div>
<div class="th" style="top:572.500px;height:105.500px">
<svg style="left:0;top:0" width="187" height="106" viewBox="0 0 187 106">
<path d="M0 58.500H158C152 76 138 82.500 120 82.500H0z" fill="#cde7de"/>
<rect x="9" y="38.400" width="53.300" height="29.200" fill="#000"/>
<rect x="62.200" y="38.400" width="63" height="29.200" fill="#045a4b"/>
<rect x="125" y="38.400" width="53.100" height="29.200" fill="#108d68"/>
</svg>
<span class="t" style="left:10.900px;top:24.200px;font-size:7.300px;color:#1a1a1a;width:58.300px;font-family:'DejaVu Serif','Liberation Serif',serif;letter-spacing:-0.027px">Event Overview</span>
<span class="t" style="left:73.500px;top:22.500px;font-size:2.900px;color:#888;width:100px;letter-spacing:0.560px">Provide an overview of the event's theme, date, venue,</span>
<span class="t" style="left:73.500px;top:27.300px;font-size:2.900px;color:#888;width:100px;letter-spacing:0.458px">and any unique characteristics that define its purpose and</span>
<span class="t" style="left:73.500px;top:31.700px;font-size:2.900px;color:#888">goals</span>
<span class="t" style="left:15.800px;top:49.500px;font-size:5.600px;color:#fff;width:39.900px;letter-spacing:0.239px">Event's Theme</span>
<span class="t" style="left:76.600px;top:49.500px;font-size:5.600px;color:#fff;width:33.700px;letter-spacing:0.196px">Event's Date</span>
<span class="t" style="left:132.500px;top:49.500px;font-size:5.600px;color:#fff;width:38.200px;letter-spacing:0.217px">Event's Venue</span>
</div>
<div class="th" style="top:710px;height:106px">
<svg style="left:0;top:0" width="187" height="106" viewBox="0 0 187 106">
<rect x="148" y="0" width="40" height="50.700" fill="#e2f1ec"/>
<use href="#phD" x="0" y="0" width="46.200" height="106"/>
<path d="M52.800 41.300H173.500M52.800 57.300H173.500M52.800 72.400H173.500" stroke="#1d6b4b" stroke-width="0.900" fill="none"/>
</svg>
<span class="t" style="left:54.400px;top:14.300px;font-size:7.300px;color:#1a1a1a;width:53.400px;font-family:'DejaVu Serif','Liberation Serif',serif;letter-spacing:0.015px">Agenda Recap</span>
<span class="t" style="left:54.500px;top:28.8px;font-size:10.500px;color:#cfe8df;width:13px;letter-spacing:1.312px">01</span>
<span class="t" style="left:71.300px;top:29.6px;font-size:2.900px;color:#8a8a8a;width:103px;letter-spacing:0.286px">Key sessions, speakers, and topics covered in the original agenda</span>
<span class="t" style="left:71.300px;top:34.2px;font-size:2.900px;color:#8a8a8a;width:40px;letter-spacing:0.891px">for quick reference</span>
<span class="t" style="left:54.500px;top:43.6px;font-size:10.500px;color:#cfe8df;width:13px;letter-spacing:1.312px">02</span>
<span class="t" style="left:71.300px;top:44.4px;font-size:2.900px;color:#8a8a8a;width:103px;letter-spacing:0.286px">Key sessions, speakers, and topics covered in the original agenda</span>
<span class="t" style="left:71.300px;top:49.3px;font-size:2.900px;color:#8a8a8a;width:40px;letter-spacing:0.891px">for quick reference</span>
<span class="t" style="left:54.500px;top:59.5px;font-size:10.500px;color:#cfe8df;width:13px;letter-spacing:1.312px">03</span>
<span class="t" style="left:71.300px;top:60.3px;font-size:2.900px;color:#8a8a8a;width:103px;letter-spacing:0.286px">Key sessions, speakers, and topics covered in the original agenda</span>
<span class="t" style="left:71.300px;top:65.2px;font-size:2.900px;color:#8a8a8a;width:40px;letter-spacing:0.891px">for quick reference</span>
<span class="t" style="left:54.500px;top:74.5px;font-size:10.500px;color:#cfe8df;width:13px;letter-spacing:1.312px">04</span>
<span class="t" style="left:71.300px;top:75.3px;font-size:2.900px;color:#8a8a8a;width:103px;letter-spacing:0.286px">Key sessions, speakers, and topics covered in the original agenda</span>
<span class="t" style="left:71.300px;top:80.2px;font-size:2.900px;color:#8a8a8a;width:40px;letter-spacing:0.891px">for quick reference</span>
</div>
<div class="th" style="top:848.500px;height:70px;border-radius:5px 5px 0 0">
<svg style="left:0;top:0" width="187" height="70" viewBox="0 0 187 70">
<rect x="0" y="0" width="87" height="70" fill="#000"/>
<path d="M101 21h3M101 32h3M101 43h3" stroke="#e4e4e4" stroke-width="0.600"/>
<path d="M113.300 30.700V50.100M122.200 24.800V50.100M131.600 31.500V50.100M141.100 20.700V50.100M150.100 39.600V50.100M159.600 16.700V50.100" stroke="#0f8d64" stroke-width="2.200" fill="none"/>
</svg>
<span class="t" style="left:9.300px;top:36px;font-size:9.300px;color:#fff;font-weight:bold;width:57.500px;font-family:'Liberation Serif',serif;letter-spacing:-0.396px">Who Attended?</span>
<span class="t" style="left:9.300px;top:50.300px;font-size:3.400px;color:#f0f0f0;font-weight:bold;width:73px;letter-spacing:0.069px">This slide showcases attendance statistics,</span>
<span class="t" style="left:9.300px;top:55.200px;font-size:3.400px;color:#f0f0f0;font-weight:bold;width:69px;letter-spacing:0.140px">demographics, and participation levels.</span>
<span class="t" style="left:9.300px;top:60px;font-size:3.400px;color:#f0f0f0;font-weight:bold;width:71px;letter-spacing:0.117px">Notable guests or VIPs are highlighted to</span>
</div>
</div>
<!-- SLIDE -->
<div class="a" id="slide"></div>
<svg style="left:0;top:0" width="1920" height="913" viewBox="0 0 1920 913">
<defs><clipPath id="qTL"><rect x="1100" y="400" width="277" height="225"/></clipPath><clipPath id="qBR"><rect x="1377" y="625" width="260" height="260"/></clipPath></defs>
<path d="M528 276H908.600A113.300 113.300 0 0 1 813 328.500H528z" fill="#108f6b"/>
<circle cx="1380.200" cy="631.900" r="201" fill="#cde7de" clip-path="url(#qTL)"/>
<circle cx="1380.200" cy="631.900" r="201" fill="#cde7de" clip-path="url(#qBR)"/>
<use href="#phA" x="1377" y="385" width="240" height="240"/>
<use href="#phB" x="1138" y="625" width="239" height="239"/>
</svg>
<span class="t" style="left:596px;top:518.300px;font-family:'DejaVu Serif','Liberation Serif',serif;font-size:48px;color:#0d0d0d;width:287.400px;letter-spacing:-1.508px">Introduction</span>
<span class="t" style="left:596px;top:591.300px;font-size:23.200px;color:#141414;width:454px;letter-spacing:-0.023px">The focus of the presentation is to delve into</span>
<span class="t" style="left:596px;top:621.200px;font-size:23.200px;color:#141414;width:441px;letter-spacing:0.065px">the highlights, key takeaways, and insights</span>
<span class="t" style="left:596px;top:650.700px;font-size:23.200px;color:#141414;width:303.800px;letter-spacing:0.078px">gained from the recent event.</span>

<!-- SCROLLBARS -->
<div class="a" id="thumbsb"></div>
<svg style="left:279px;top:275px" width="14" height="10" viewBox="0 0 14 10"><path d="M7 0.500L13.500 9.500H0.500z" fill="#c9c9c9"/></svg>
<div class="a" style="left:280px;top:293px;width:12px;height:325px;border-radius:6px;background:#c6c6c6"></div>
<div class="a" id="divider"></div>
<div class="a" id="vsb"></div>
<svg style="left:1901px;top:275px" width="14" height="10" viewBox="0 0 14 10"><path d="M7 0.500L13.500 9.500H0.500z" fill="#c9c9c9"/></svg>
<div class="a" style="left:1901.500px;top:366px;width:11px;height:46px;border-radius:5.500px;background:#c9c9c9"></div>
<svg style="left:1900.500px;top:827px" width="14" height="10" viewBox="0 0 14 10"><path d="M7 9.500L13.500 0.500H0.500z" fill="#c9c9c9"/></svg>
<svg style="left:1899.500px;top:848px" width="14" height="18" viewBox="0 0 14 18"><path d="M7 0.500L13.500 8.500H0.500zM7 8.500L13.500 16.500H0.500z" fill="#c9c9c9"/></svg>
<svg style="left:1899.500px;top:874.500px" width="14" height="18" viewBox="0 0 14 18"><path d="M7 9.500L13.500 1.500H0.500zM7 17.500L13.500 9.500H0.500z" fill="#c9c9c9"/></svg>
</body>
</html>
